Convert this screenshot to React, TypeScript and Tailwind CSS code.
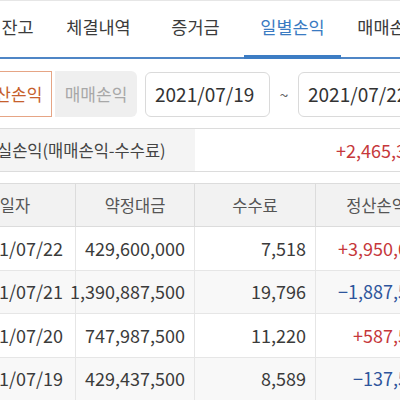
import clsx from 'clsx';

const tabs = ['주식잔고', '체결내역', '증거금', '일별손익', '매매손익'];

interface DailyRow {
  date: string;
  amount: string;
  fee: string;
  profit: string;
}

const rows: DailyRow[] = [
  { date: '2021/07/22', amount: '429,600,000', fee: '7,518', profit: '+3,950,012' },
  { date: '2021/07/21', amount: '1,390,887,500', fee: '19,796', profit: '−1,887,504' },
  { date: '2021/07/20', amount: '747,987,500', fee: '11,220', profit: '+587,520' },
  { date: '2021/07/19', amount: '429,437,500', fee: '8,589', profit: '−137,531' },
];

export default function App() {
  return (
    <div className="w-[400px] h-[400px] overflow-hidden bg-white text-[#3b3b3b] font-['Noto_Sans_CJK_KR',sans-serif]">
      {/* tabs */}
      <div className="h-[59px] border-t border-[#e6e6e6] border-b-2 border-b-[#4f86c6] flex items-stretch">
        <div className="flex items-stretch -ml-[47px] shrink-0">
          {tabs.map((tab) => (
            <div
              key={tab}
              className={clsx(
                'w-[97px] shrink-0 flex items-center justify-center pb-[3px] text-[17.5px]',
                tab === '일별손익' && '-mb-[2px] border-b-4 border-[#3d7dc4] text-[#3a7bc2] pt-[2px]'
              )}
            >
              {tab}
            </div>
          ))}
        </div>
      </div>

      {/* filters */}
      <div className="mt-[12px] h-[46px] flex items-center">
        <div className="flex -ml-[30px] shrink-0">
          <button className="w-[82px] h-[46px] border border-[#e6a585] bg-white text-[#c6602c] text-[17px]">
            정산손익
          </button>
          <button className="w-[82px] h-[46px] ml-[3px] rounded-r-[6px] bg-[#efefef] text-[#a8a8a8] text-[17px]">
            매매손익
          </button>
        </div>
        <div className="ml-[8px] w-[125px] h-[45px] shrink-0 border border-[#dadada] rounded-[6px] flex items-center pl-[9px] text-[19px] text-[#333]">
          2021/07/19
        </div>
        <div className="w-[28px] shrink-0 text-center text-[16px] text-[#666]">~</div>
        <div className="w-[125px] h-[45px] shrink-0 border border-[#dadada] rounded-[6px] flex items-center pl-[9px] text-[19px] text-[#333]">
          2021/07/22
        </div>
      </div>

      <div className="-ml-[45px] w-[484px]">
        {/* summary */}
        <div className="mt-[11px] h-[44px] flex border-y border-[#dcdcdc]">
          <div className="w-[240px] bg-[#f4f4f4] flex items-center pl-[42px] text-[16.5px] text-[#444]">
            실손익(매매손익-수수료)
          </div>
          <div className="flex-1 flex items-center justify-end pr-[13px] text-[18px] text-[#c6383b]">
            +2,465,318
          </div>
        </div>

        {/* table header */}
        <div className="mt-[11px] h-[44px] grid grid-cols-[121px_119px_121px_121px] bg-[#f2f2f2] border-y border-[#dcdcdc] text-[16.5px] text-[#555]">
          <div className="flex items-center justify-center border-r border-[#dcdcdc]">일자</div>
          <div className="flex items-center justify-center border-r border-[#dcdcdc]">약정대금</div>
          <div className="flex items-center justify-center border-r border-[#dcdcdc]">수수료</div>
          <div className="flex items-center justify-center">정산손익</div>
        </div>

        {/* table rows */}
        {rows.map((row, i) => (
          <div
            key={row.date}
            className={clsx(
              'h-[43.5px] grid grid-cols-[121px_119px_121px_121px] border-b border-[#e6e6e6] text-[18px]',
              i % 2 === 1 ? 'bg-[#f8f8f8]' : 'bg-white'
            )}
          >
            <div className="flex items-center justify-end pr-[12px] border-r border-[#e6e6e6]">{row.date}</div>
            <div className="flex items-center justify-end pr-[9px] border-r border-[#e6e6e6]">{row.amount}</div>
            <div className="flex items-center justify-end pr-[9px] border-r border-[#e6e6e6]">{row.fee}</div>
            <div
              className={clsx(
                'flex items-center justify-end pr-[9px]',
                row.profit.startsWith('+') ? 'text-[#c6383b]' : 'text-[#2e559c]'
              )}
            >
              {row.profit}
            </div>
          </div>
        ))}
      </div>
    </div>
  );
}
